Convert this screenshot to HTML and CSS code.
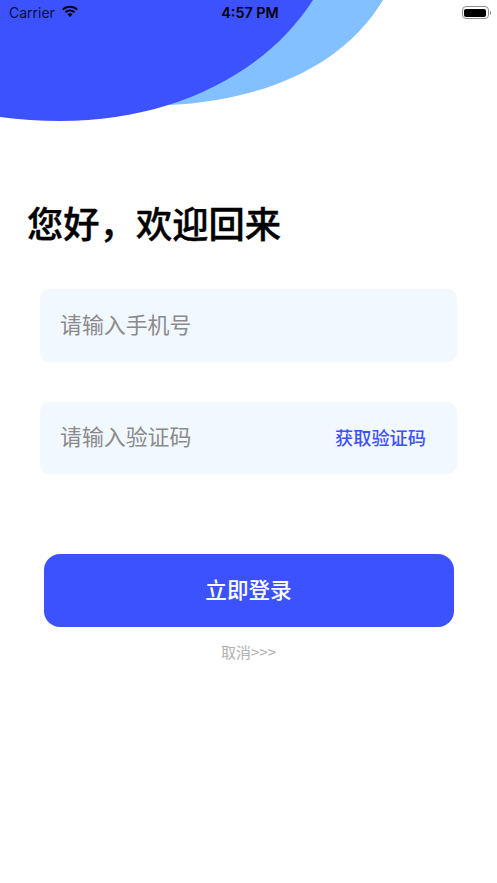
FILE: index.html
```html
<!DOCTYPE html>
<html lang="zh-CN">
<head>
<meta charset="utf-8">
<title>登录</title>
<link rel="stylesheet" href="styles.css">
</head>
<body>
<div class="page">
  <svg class="waves" width="497" height="130" viewBox="0 0 497 130" aria-hidden="true">
    <path class="wave-light" d="M150 105.500C250 105 340 72 383 0H200Z"/>
    <path class="wave-dark" d="M0 117C20 119.500 40 121 60 121C170 121 265 75 313 0H0Z"/>
  </svg>
  <header class="status">
    <div class="status-left">
      <span class="carrier">Carrier</span>
      <svg class="wifi" width="18" height="14" viewBox="0 0 18 13"><path d="M9 2.200c2.500 0 4.800 1 6.500 2.600l1.300-1.400C14.700 1.400 12 .2 9 .2S3.300 1.400 1.200 3.400l1.300 1.400C4.200 3.200 6.500 2.200 9 2.200Z"/><path d="M9 6c1.500 0 2.900.6 3.900 1.500l1.300-1.400C12.800 4.800 11 4 9 4S5.200 4.800 3.800 6.100l1.300 1.400C6.100 6.600 7.500 6 9 6Z"/><path d="M9 7.800c-1 0-1.800.4-2.500 1L9 11.600l2.500-2.800c-.7-.6-1.500-1-2.500-1Z"/></svg>
    </div>
    <span class="time">4:57 PM</span>
    <div class="battery"><span class="battery-body"><span class="battery-fill"></span></span><span class="battery-cap"></span></div>
  </header>
  <main class="content">
    <h1 class="title">您好，欢迎回来</h1>
    <div class="fields">
      <div class="field"><span class="placeholder">请输入手机号</span></div>
      <div class="field"><span class="placeholder">请输入验证码</span><span class="code">获取验证码</span></div>
    </div>
    <button class="login">立即登录</button>
    <div class="cancel">取消&gt;&gt;&gt;</div>
  </main>
</div>
</body>
</html>
```
FILE: styles.css
```css
* { box-sizing: border-box; }
html, body { margin: 0; padding: 0; background: #fff; }
body { font-family: "Noto Sans CJK SC", "Noto Sans", sans-serif; }
.page { position: relative; width: 497px; height: 883px; overflow: hidden; }
.waves { position: absolute; left: 0; top: 0; }
.wave-light { fill: #82c0ff; }
.wave-dark { fill: #3d52ff; }
.status { position: relative; height: 26px; display: grid; grid-template-columns: 1fr auto 1fr; align-items: center; padding: 0 6px 1px 9px; color: #000; font-family: Inter, "Liberation Sans", sans-serif; }
.status-left { display: flex; align-items: center; gap: 6px; }
.carrier { font-size: 14px; color: #0a0f3c; }
.wifi { fill: #000; margin-top: -1px; }
.time { font-size: 14.300px; font-weight: 600; }
.battery { justify-self: end; display: flex; align-items: center; gap: 1px; }
.battery-body { width: 27px; height: 13px; border: 1px solid #8e8e8e; border-radius: 4px; padding: 1.500px; display: block; }
.battery-fill { display: block; width: 100%; height: 100%; background: #000; border-radius: 2px; }
.battery-cap { width: 1.500px; height: 4px; background: #8e8e8e; border-radius: 0 1px 1px 0; }
.content { position: relative; display: flex; flex-direction: column; }
.title { margin: 169px 0 0 27px; font-size: 36.300px; line-height: 54px; font-weight: 500; -webkit-text-stroke: 0.4px #000; color: #000; }
.fields { display: flex; flex-direction: column; gap: 40px; margin: 40px 40px 0; }
.field { height: 72.500px; background: #f2f8ff; border-radius: 10px; padding: 0 31px 4px 20px; display: flex; align-items: center; justify-content: space-between; }
.placeholder { font-size: 21.900px; color: #8a8a8a; }
.code { font-size: 18.200px; font-weight: 500; color: #3d52ff; margin-top: 2px; }
.login { margin: 80px 43.500px 0 43.500px; height: 72.500px; border: 0; border-radius: 16px; background: #3d52ff; color: #fff; padding-bottom: 4px; font: 500 21.600px "Noto Sans CJK SC", sans-serif; }
.cancel { margin-top: 14px; text-align: center; font-size: 15px; line-height: 22px; color: #b0b0b0; }
```
